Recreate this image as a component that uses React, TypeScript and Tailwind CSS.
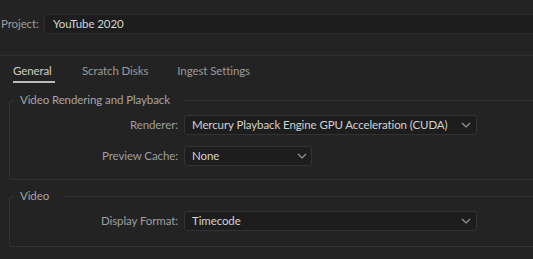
import React from "react";

function Chevron() {
  return (
    <svg width="10" height="6" viewBox="0 0 10 6" className="shrink-0">
      <path d="M1 1 L5 5 L9 1" fill="none" stroke="#9a9a9a" strokeWidth="1.2" />
    </svg>
  );
}

function Select({ value, width, chevronPad }: { value: string; width: string; chevronPad: string }) {
  return (
    <div
      className={`${width} h-[20px] flex items-center justify-between rounded-[3px] border border-[#333333] bg-[#1d1d1d] pl-[7px] ${chevronPad}`}
    >
      <span className="text-[#d2d2d2] leading-none whitespace-nowrap">{value}</span>
      <Chevron />
    </div>
  );
}

function Row({ label, children }: { label: string; children: React.ReactNode }) {
  return (
    <div className="flex items-center">
      <div className="w-[168px] pr-0 text-right text-[#9e9e9e] leading-none whitespace-nowrap">{label}</div>
      <div className="ml-[6px]">{children}</div>
    </div>
  );
}

export default function App() {
  return (
    <div
      className="w-[533px] h-[259px] overflow-hidden bg-[#232323] text-[11.5px] tracking-[-0.1px]"
      style={{ fontFamily: 'Lato, "Noto Sans", sans-serif' }}
    >
      <div className="pt-[14px] flex items-center">
        <div className="w-[44px] pl-[1px] text-[#9c9c9c] leading-none">Project:</div>
        <div className="flex-1 -mr-2 h-[20px] flex items-center rounded-[3px] border border-[#2e2e2e] bg-[#1d1d1d] pl-[8px] text-[#d4d4d4] leading-none">
          YouTube 2020
        </div>
      </div>
      <div className="mt-[21px] h-px bg-[#2f2f2f]" />
      <div className="flex pl-[13px] pt-[7px]">
        <div className="flex flex-col items-start">
          <span className="text-[#cdcdcd] leading-[16px]">General</span>
          <div className="mt-[2px] h-[2px] w-[42px] bg-[#bdbdbd]" />
        </div>
        <span className="ml-[27px] text-[#9a9a9a] leading-[16px] whitespace-nowrap">Scratch Disks</span>
        <span className="ml-[29px] text-[#9a9a9a] leading-[16px] whitespace-nowrap">Ingest Settings</span>
      </div>
      <fieldset className="ml-[9px] -mr-4 mt-[9px] rounded-[4px] border border-[#333333] px-0 pb-[13px] pt-0">
        <legend className="ml-[4px] pl-[6px] pr-[14px] text-[#a6a6a6] leading-[16px] whitespace-nowrap">
          Video Rendering and Playback
        </legend>
        <div className="mt-[7px] flex flex-col gap-[11px]">
          <Row label="Renderer:">
            <Select value="Mercury Playback Engine GPU Acceleration (CUDA)" width="w-[293px]" chevronPad="pr-[5px]" />
          </Row>
          <Row label="Preview Cache:">
            <Select value="None" width="w-[128px]" chevronPad="pr-[4px]" />
          </Row>
        </div>
      </fieldset>
      <fieldset className="ml-[9px] -mr-4 mt-[8px] rounded-[4px] border border-[#333333] px-0 pb-[15px] pt-0">
        <legend className="ml-[4px] pl-[6px] pr-[14px] text-[#a6a6a6] leading-[16px]">Video</legend>
        <div className="mt-[7px]">
          <Row label="Display Format:">
            <Select value="Timecode" width="w-[293px]" chevronPad="pr-[5px]" />
          </Row>
        </div>
      </fieldset>
    </div>
  );
}
